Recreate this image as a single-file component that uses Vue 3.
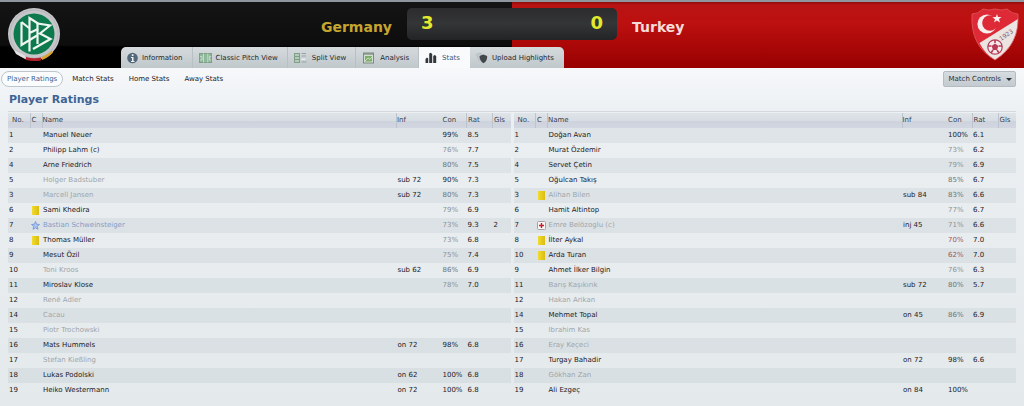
<template>
  <main class="match-page">
    <header class="match-header">
      <div class="side side-home">
        <svg class="crest crest-home" viewBox="0 0 54 54" role="img" aria-label="DFB">
          <circle cx="27" cy="26" r="26" fill="#c6c6ca" />
          <circle cx="27" cy="26" r="24" fill="none" stroke="#b4b6b8" stroke-width="1" />
          <circle cx="27" cy="26" r="20.5" fill="#0c7a4d" />
          <path d="M7 42 L18 47.5 L19 51.5 L9 46 Z" fill="#e0e0e0" />
          <path d="M19 49 Q26 51 34 49.6 L34 52.4 Q26 54 19 52 Z" fill="#b3202a" />
          <path d="M35 49 Q41 46.5 45 42.5 L46 44.5 Q41 50 35 52 Z" fill="#d9a531" />
          <g fill="none" stroke="#f1f5f2" stroke-width="2.2" stroke-linejoin="miter">
            <path d="M14.5 14 L14.5 37 L30 27.5" />
            <path d="M14.5 14 L22 20" />
            <path d="M22.5 43.5 L22.5 10 L31 15.5 M22.5 25 L31 21" />
            <path d="M30.5 36 L30.5 15.5 L43 17.5 L33 25.5 L43.5 31 L26 41" />
          </g>
        </svg>
        <h2 class="team team-home">Germany</h2>
      </div>
      <div class="scoreboard">
        <span>3</span>
        <span>0</span>
      </div>
      <div class="side side-away">
        <h2 class="team team-away">Turkey</h2>
        <svg class="crest crest-away" viewBox="0 0 48 54" role="img" aria-label="TFF">
          <path d="M1 6 Q7 6 12 1 Q18 3 24 1 Q31 3 36 1 Q41 6 47 6 Q49 36 24 52 Q-1 38 1 6 Z" fill="#dd2a36" />
          <path d="M47 11 Q47 38 24 52 Q14 46 8.5 35 Z" fill="#ece4e0" />
          <path d="M1 6 Q7 6 12 1 Q18 3 24 1 Q31 3 36 1 Q41 6 47 6 Q49 36 24 52 Q-1 38 1 6 Z" fill="none" stroke="#e05a5e" stroke-width="0.8" />
          <circle cx="16" cy="16" r="9.6" fill="#f7eeee" />
          <circle cx="19" cy="15" r="7.8" fill="#dd2a36" />
          <path d="M26 6 L27 9 L30.5 9 L28 11 L29 14.5 L25.8 12.6 L23 14.6 L24 11.3 L21.4 9.2 L24.8 9 Z" fill="#f7eeee" />
          <circle cx="24" cy="39" r="7.2" fill="#f4ecec" stroke="#b83a58" stroke-width="1.2" />
          <path d="M24 35.5 L27.4 38 L26 42 L22 42 L20.6 38 Z" fill="#b83a58" />
          <path d="M24 32 V35 M31 38 H27.5 M28 45 L26 42 M20 45 L22 42 M17 38 H20.5" stroke="#b83a58" stroke-width="1.6" />
          <text x="30" y="33" transform="rotate(-34 30 33)" font-size="6" fill="#7d5a78">1923</text>
        </svg>
      </div>
      <nav class="tabs" aria-label="Match views">
        <button
          v-for="tab in tabs"
          :key="tab"
          type="button"
          class="tab"
          :class="{ 'is-active': tab === activeTab }"
          @click="activeTab = tab"
        >
          <svg v-if="tab === 'Information'" class="tab-icon" width="11" height="12" viewBox="0 0 11 12">
            <circle cx="5.5" cy="6" r="5.3" fill="#536878" />
            <path d="M4 5 H6.5 V9 H7.5 V10 H4 V9 H5 V6 H4 Z M4.8 2.3 H6.5 V3.9 H4.8 Z" fill="#eef2f4" />
          </svg>
          <svg v-else-if="tab === 'Classic Pitch View'" class="tab-icon" width="13" height="12" viewBox="0 0 13 12">
            <rect x="0.5" y="1.5" width="12" height="9" fill="#8fb79a" stroke="#7d9f88" />
            <path d="M4.5 1.5 V10.5 M8.8 1.5 V10.5 M1 4.5 H3 V8 H1 M12.2 4.5 H10.4 V8 H12.2" stroke="#c3dac9" fill="none" />
          </svg>
          <svg v-else-if="tab === 'Split View'" class="tab-icon" width="14" height="12" viewBox="0 0 14 12">
            <rect x="0.5" y="1.5" width="5" height="9" fill="#b5cbb9" stroke="#7fa087" />
            <path d="M1 4.5 H5 M1 7.5 H5" stroke="#7fa087" />
            <path d="M7.5 1.5 H12 M7.5 4 H12 M7.5 10 H12.5" stroke="#98a5a5" />
            <path d="M7.5 6 H12 V8.5 H7.5" stroke="#c7d0d0" fill="#e8eded" />
          </svg>
          <svg v-else-if="tab === 'Analysis'" class="tab-icon" width="14" height="12" viewBox="0 0 14 12">
            <rect x="1.5" y="1" width="10" height="10" fill="#d3dfd0" stroke="#7d8a7f" />
            <path d="M2 2 H11" stroke="#69766b" />
            <rect x="3" y="4" width="7" height="5.5" fill="#7fae6c" />
            <path d="M3 9 L6 6 L8 7.5 L10 5" stroke="#c9e0bf" fill="none" />
          </svg>
          <svg v-else-if="tab === 'Stats'" class="tab-icon" width="13" height="12" viewBox="0 0 13 12">
            <path d="M0.5 7 L2 5.5 L3.2 6.5 V11 H0.5 Z M4.2 1.5 L5.7 0.8 L7.2 2 V11 H4.2 Z M8.2 4 L9.7 3 L11.2 4 V11 H8.2 Z" fill="#34383d" />
          </svg>
          <svg v-else class="tab-icon" width="12" height="12" viewBox="0 0 12 12">
            <path d="M0.5 2 L5 1 L6 6 L3 8.5 Z" fill="#c3cacd" stroke="#a8b0b4" stroke-width="0.5" />
            <path d="M3.5 4 L7.3 2.5 L11.2 4 Q11.5 9 7.5 11.2 Q3.5 9 3.5 4 Z" fill="#42474c" />
          </svg>
          {{ tab }}
        </button>
      </nav>
    </header>

    <div class="toolbar">
      <nav class="subnav" aria-label="Stats">
        <a
          v-for="link in links"
          :key="link"
          href="#"
          class="subnav-link"
          :class="{ 'is-active': link === activeLink }"
          @click.prevent="activeLink = link"
        >{{ link }}</a>
      </nav>
      <button type="button" class="controls">
        Match Controls
        <span class="caret" aria-hidden="true"></span>
      </button>
    </div>

    <h1 class="title">Player Ratings</h1>

    <section class="ratings">
      <table v-for="team in teams" :key="team.name" class="players" :aria-label="team.name">
        <thead>
          <tr>
            <th class="col-no">No.</th>
            <th class="col-card">C</th>
            <th class="col-name">Name</th>
            <th class="col-inf">Inf</th>
            <th class="col-con">Con</th>
            <th class="col-rat">Rat</th>
            <th class="col-gls">Gls</th>
          </tr>
        </thead>
        <tbody>
          <tr v-for="[no, name, status, mark, inf, con, rat, gls] in team.players" :key="no">
            <td>{{ no }}</td>
            <td>
              <span v-if="mark === 'card'" class="card"></span>
              <svg v-else-if="mark === 'star'" class="mark-icon" viewBox="0 0 9 9">
                <path d="M4.5 0.6 L5.6 3.2 L8.5 3.5 L6.3 5.4 L7 8.3 L4.5 6.8 L2 8.3 L2.7 5.4 L0.5 3.5 L3.4 3.2 Z" fill="#a9c4f0" stroke="#6f93d6" stroke-width="0.8" />
              </svg>
              <svg v-else-if="mark === 'injury'" class="mark-icon" viewBox="0 0 9 9">
                <rect x="0.5" y="0.5" width="8" height="8" rx="1" fill="#faf5f5" stroke="#a89ea2" />
                <path d="M4.5 2 V7 M2 4.5 H7" stroke="#c4202c" stroke-width="1.4" />
              </svg>
            </td>
            <td :class="status">{{ name }}</td>
            <td>{{ inf }}</td>
            <td :class="conClass(con)">{{ con ? con + "%" : "" }}</td>
            <td>{{ rat }}</td>
            <td>{{ gls }}</td>
          </tr>
        </tbody>
      </table>
    </section>
  </main>
</template>

<script setup>
import { ref } from "vue";

const tabs = [
  "Information",
  "Classic Pitch View",
  "Split View",
  "Analysis",
  "Stats",
  "Upload Highlights",
];
const activeTab = ref("Stats");

const links = ["Player Ratings", "Match Stats", "Home Stats", "Away Stats"];
const activeLink = ref("Player Ratings");

// number, name, status, mark, info, condition, rating, goals
const teams = [
  {
    name: "Germany",
    players: [
      [1, "Manuel Neuer", "", "", "", 99, "8.5", ""],
      [2, "Philipp Lahm (c)", "", "", "", 76, "7.7", ""],
      [4, "Arne Friedrich", "", "", "", 80, "7.5", ""],
      [5, "Holger Badstuber", "off", "", "sub 72", 90, "7.3", ""],
      [3, "Marcell Jansen", "off", "", "sub 72", 80, "7.3", ""],
      [6, "Sami Khedira", "", "card", "", 79, "6.9", ""],
      [7, "Bastian Schweinsteiger", "best", "star", "", 73, "9.3", "2"],
      [8, "Thomas Müller", "", "card", "", 73, "6.8", ""],
      [9, "Mesut Özil", "", "", "", 75, "7.4", ""],
      [10, "Toni Kroos", "off", "", "sub 62", 86, "6.9", ""],
      [11, "Miroslav Klose", "", "", "", 78, "7.0", ""],
      [12, "René Adler", "off", "", "", 0, "", ""],
      [14, "Cacau", "off", "", "", 0, "", ""],
      [15, "Piotr Trochowski", "off", "", "", 0, "", ""],
      [16, "Mats Hummels", "", "", "on 72", 98, "6.8", ""],
      [17, "Stefan Kießling", "off", "", "", 0, "", ""],
      [18, "Lukas Podolski", "", "", "on 62", 100, "6.8", ""],
      [19, "Heiko Westermann", "", "", "on 72", 100, "6.8", ""],
    ],
  },
  {
    name: "Turkey",
    players: [
      [1, "Doğan Avan", "", "", "", 100, "6.1", ""],
      [2, "Murat Özdemir", "", "", "", 73, "6.2", ""],
      [4, "Servet Çetin", "", "", "", 79, "6.9", ""],
      [5, "Oğulcan Takış", "", "", "", 85, "6.7", ""],
      [3, "Alihan Bilen", "off", "card", "sub 84", 83, "6.6", ""],
      [6, "Hamit Altintop", "", "", "", 77, "6.7", ""],
      [7, "Emre Belözoglu (c)", "off", "injury", "inj 45", 71, "6.6", ""],
      [8, "İlter Aykal", "", "card", "", 70, "7.0", ""],
      [10, "Arda Turan", "", "card", "", 62, "7.0", ""],
      [9, "Ahmet İlker Bilgin", "", "", "", 76, "6.3", ""],
      [11, "Barış Kaşıkırık", "off", "", "sub 72", 80, "5.7", ""],
      [12, "Hakan Arikan", "off", "", "", 0, "", ""],
      [14, "Mehmet Topal", "", "", "on 45", 86, "6.9", ""],
      [15, "Ibrahim Kas", "off", "", "", 0, "", ""],
      [16, "Eray Keçeci", "off", "", "", 0, "", ""],
      [17, "Turgay Bahadir", "", "", "on 72", 98, "6.6", ""],
      [18, "Gökhan Zan", "off", "", "", 0, "", ""],
      [19, "Ali Ezgeç", "", "", "on 84", 100, "", ""],
    ],
  },
];

function conClass(con) {
  if (con >= 90) return "con-full";
  if (con >= 80) return "con-good";
  if (con > 70) return "con-mid";
  return "con-low";
}
</script>

<style>
body {
  margin: 0;
  background: #e4e9ec;
}
</style>

<style scoped>
.match-page {
  min-height: 100vh;
  box-sizing: border-box;
  background: linear-gradient(to bottom, #f6f8fa 68px, #ebeff2 120px, #e4e9ec 100%);
  font-family: "DejaVu Sans", sans-serif;
  font-size: 7px;
  color: #1c2024;
}

/* ─── Header ───────────────────────────────────────────────────────────────── */
.match-header {
  position: relative;
  display: grid;
  grid-template-columns: 1fr 210px 1fr;
  height: 66px;
  border-top: 2px solid #8f969d;
  background:
    linear-gradient(to bottom, #8e0d0d 0, #b91313 3px, #bd1010 20px, #980000 100%) right / 50% 100% no-repeat,
    linear-gradient(to bottom, #141414, #0d0d0d 43px, #000 45px);
}

.side {
  display: flex;
  justify-content: space-between;
  align-items: flex-start;
}
.side-home {
  padding: 6px 15px 0 7px;
}
.side-away {
  padding: 6px 5px 0 15px;
}

.crest-home {
  width: 54px;
  height: 54px;
}
.crest-away {
  width: 48px;
  height: 54px;
}

.team {
  margin: 10px 0 0;
  font-size: 14px;
  line-height: 18px;
  font-weight: bold;
}
.team-home {
  color: #c6a52f;
}
.team-away {
  color: #f6dcd8;
}

.scoreboard {
  display: flex;
  justify-content: space-between;
  height: 32px;
  box-sizing: border-box;
  margin-top: 6px;
  padding: 0 14px;
  border-radius: 5px;
  background: linear-gradient(to bottom, #2c2c2e, #343537 50%, #232425);
  font-size: 18px;
  line-height: 30px;
  font-weight: bold;
  color: #e3ea2c;
}

/* ─── Tabs, resting on the lower edge of the header ───────────────────────── */
.tabs {
  position: absolute;
  left: 121px;
  bottom: 0;
  display: flex;
  height: 21px;
  border-radius: 5px 5px 0 0;
  overflow: hidden;
}
.tab {
  display: flex;
  align-items: center;
  gap: 4px;
  padding: 0 9px 0 6px;
  border: 0;
  border-right: 1px solid #b9c0c4;
  background: linear-gradient(to bottom, #d5dadd, #c0c8cb);
  font: inherit;
  color: #23282c;
  white-space: nowrap;
  cursor: pointer;
}
.tab:last-child {
  border-right-color: transparent;
}
.tab.is-active {
  border-right-color: #f8fafb;
  background: #f8fafb;
  color: #35597f;
}
.tab-icon {
  flex-shrink: 0;
}

/* ─── Sub navigation ───────────────────────────────────────────────────────── */
.toolbar {
  display: flex;
  justify-content: space-between;
  padding: 3px 8px 0 1px;
}
.subnav {
  display: flex;
  gap: 3px;
}
.subnav-link {
  padding: 0 5px;
  border: 1px solid transparent;
  border-radius: 8px;
  line-height: 14px;
  color: #1c2024;
  text-decoration: none;
}
.subnav-link.is-active {
  border-color: #bcc6cc;
  background: #fbfcfd;
  color: #3c5f92;
}

.controls {
  display: flex;
  align-items: center;
  gap: 5px;
  height: 16px;
  padding: 0 3px 0 4px;
  border: 1px solid #b4bcc2;
  border-radius: 2px;
  background: linear-gradient(to bottom, #d6dce0, #c3cbd0);
  font: inherit;
  color: #2b3136;
}
.caret {
  border: 3px solid transparent;
  border-top-color: #2b3136;
  border-bottom: 0;
}

.title {
  margin: 0;
  padding: 6px 9px 4px;
  font-size: 11px;
  line-height: 14px;
  color: #3e6496;
}

/* ─── Player tables ────────────────────────────────────────────────────────── */
.ratings {
  display: grid;
  grid-template-columns: 1fr 1fr;
  gap: 3px;
  margin: 0 8px;
  padding-top: 1px;
  border-top: 1px solid #d3d9df;
}
.players {
  width: 100%;
  table-layout: fixed;
  border-collapse: collapse;
}
.players th,
.players td {
  height: 15px;
  padding: 0 0 0 1px;
  line-height: 15px;
  text-align: left;
  white-space: nowrap;
}
.players th {
  box-sizing: border-box;
  border-left: 1px solid #bcc4ce;
  font-weight: normal;
  color: #3a424c;
}
.players thead tr {
  background: linear-gradient(to bottom, #dfe4e9, #d8dde3 50%, #cdd3dd 50%, #d1d6e0);
}
.players tbody tr:nth-child(odd) {
  background: rgba(170, 186, 192, 0.2);
}
.players .col-no {
  width: 22px;
  padding-left: 4px;
  border-left: 0;
}
.col-card {
  width: 12px;
}
.players .col-name,
.players .col-inf {
  padding-left: 0;
}
.col-inf {
  width: 45px;
}
.players .col-con {
  width: 25px;
  border-left: 0;
}
.col-rat {
  width: 26px;
}
.col-gls {
  width: 18px;
}

.card {
  display: block;
  width: 7px;
  height: 9px;
  margin-left: 1px;
  background: linear-gradient(to right, #f0dc2e, #dcbc12);
}
.mark-icon {
  display: block;
  width: 9px;
  height: 9px;
}

.off {
  color: #a0a5a9;
}
.best {
  color: #849bc6;
}
.con-full {
  color: #1c2024;
}
.con-good {
  color: #6c7276;
}
.con-mid {
  color: #8d9397;
}
.con-low {
  color: #a4535a;
}
</style>
